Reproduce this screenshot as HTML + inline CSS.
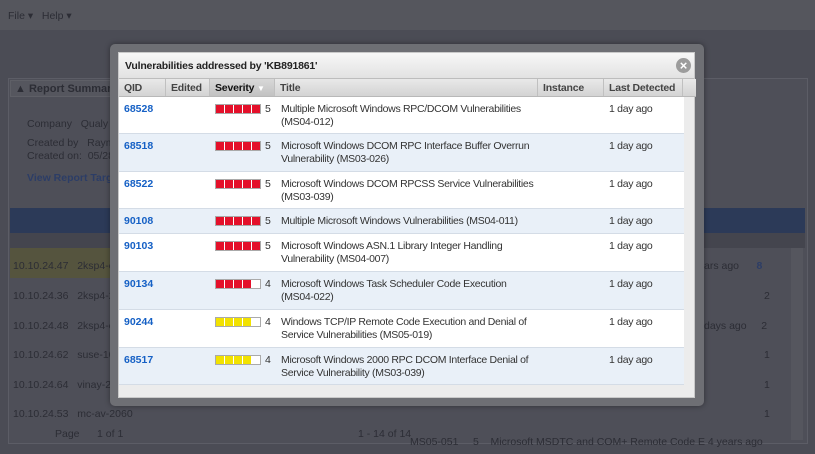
<!DOCTYPE html>
<html><head><meta charset="utf-8"><style>
*{margin:0;padding:0;box-sizing:border-box}
html,body{width:815px;height:454px;overflow:hidden;background:#4b4c55}
body{font-family:"Liberation Sans",sans-serif;position:relative}
.a{position:absolute}
.bg{color:#2c2d35;font-size:10.5px;white-space:nowrap}
.modal{left:110px;top:44px;width:594px;height:362px;background:#6e6f74;border-radius:5px;box-shadow:0 0 6px rgba(0,0,0,.4)}
.inner{left:118px;top:52px;width:577px;height:346px;background:#ececec;border:1px solid #c9c9c9}
.titlebar{left:0;top:0;width:575px;height:26px;background:linear-gradient(#f7f7f7,#e2e2e2);border-bottom:1px solid #bdbdbd;font-weight:bold;font-size:10.5px;color:#222;padding:7px 6px;letter-spacing:-0.2px}
.close{left:557px;top:5px;width:15px;height:15px;border-radius:50%;background:#9c9c9c;color:#fff;font-size:13px;line-height:15px;text-align:center;font-weight:bold}
.hdr{left:0;top:26px;width:577px;height:18px;background:linear-gradient(#e9e9e9,#d3d3d3);border-bottom:1px solid #b8b8b8}
.hdr div{position:absolute;top:0;height:17px;border-right:1px solid #c0c0c0;font-size:10.5px;color:#444;padding:3px 5px;font-weight:bold;white-space:nowrap;letter-spacing:-0.2px}
.grid{left:0;top:44px;width:565px;height:288px;background:#fff}
.row{position:absolute;left:0;width:565px;border-bottom:1px solid #d4dce6;font-size:10.5px;color:#333;letter-spacing:-0.3px}
.row.alt{background:#e9f0f8}
.q{position:absolute;left:5px;top:6px;color:#1560c5;font-weight:bold;letter-spacing:0}
.sev{position:absolute;left:96px;top:7px;width:46px;height:10px;display:flex;gap:1px;border:1px solid #aaa;background:#fff}
.sev i{display:block;width:8px;height:8px}
.n{position:absolute;left:146px;top:6px}
.t{position:absolute;left:162px;top:6px;width:260px;line-height:13px}
.l{position:absolute;left:490px;top:6px}
</style></head><body>
<svg class="a" style="left:0;top:0" width="815" height="454">
<rect x="0" y="0" width="815" height="454" fill="#4b4c55"/>
<rect x="0" y="0" width="815" height="30" fill="#55565d"/>
<rect x="8.5" y="78.5" width="799" height="365" fill="#4e4f58" stroke="#5c5d66"/>
<rect x="10.5" y="80.5" width="110" height="16" fill="#55565e" stroke="#5e5f66"/>
<rect x="10" y="208" width="795" height="25" fill="#2c3a58"/>
<rect x="10" y="233" width="795" height="15" fill="#44454e"/>
<rect x="10" y="248" width="100" height="30" fill="#55543e"/>
<rect x="791" y="248" width="12" height="192" fill="#55565e"/>
</svg>
<div class="a bg" style="left:8px;top:10px">File ▾ &nbsp; Help ▾</div>
<div class="a bg" style="left:15px;top:83px;font-weight:bold;font-size:11px">▲ Report Summary</div>
<div class="a bg" style="left:27px;top:118px">Company &nbsp; Qualy</div>
<div class="a bg" style="left:27px;top:137px">Created by &nbsp; Raym</div>
<div class="a bg" style="left:27px;top:150px">Created on: &nbsp;05/28</div>
<div class="a bg" style="left:27px;top:172px;color:#2c3d66;font-weight:bold">View Report Targe</div>
<div class="a bg" style="left:13px;top:260px">10.10.24.47 &nbsp; 2ksp4-cf-</div>
<div class="a bg" style="left:13px;top:290px">10.10.24.36 &nbsp; 2ksp4-26-</div>
<div class="a bg" style="left:13px;top:320px">10.10.24.48 &nbsp; 2ksp4-cf-</div>
<div class="a bg" style="left:13px;top:349px">10.10.24.62 &nbsp; suse-101-</div>
<div class="a bg" style="left:13px;top:379px">10.10.24.64 &nbsp; vinay-24-</div>
<div class="a bg" style="left:13px;top:408px">10.10.24.53 &nbsp; mc-av-2060</div>
<div class="a bg" style="left:55px;top:428px">Page &nbsp;&nbsp;&nbsp;&nbsp; 1 of 1</div>
<div class="a bg" style="left:358px;top:428px">1 - 14 of 14</div>
<div class="a bg" style="left:704px;top:260px">ars ago &nbsp;&nbsp;&nbsp;&nbsp; <b style="color:#2c3d66">8</b></div>
<div class="a bg" style="left:764px;top:290px">2</div>
<div class="a bg" style="left:704px;top:320px">days ago &nbsp;&nbsp;&nbsp; 2</div>
<div class="a bg" style="left:764px;top:349px">1</div>
<div class="a bg" style="left:764px;top:379px">1</div>
<div class="a bg" style="left:764px;top:408px">1</div>
<div class="a bg" style="left:410px;top:436px">MS05-051 &nbsp;&nbsp;&nbsp; 5 &nbsp;&nbsp; Microsoft MSDTC and COM+ Remote Code E 4 years ago</div>

<div class="a modal"></div>
<div class="a inner">
 <div class="a titlebar">Vulnerabilities addressed by 'KB891861'</div>
 <div class="a close">×</div>
 <div class="a hdr">
  <div style="left:0;width:47px">QID</div>
  <div style="left:47px;width:44px">Edited</div>
  <div style="left:91px;width:65px;background:linear-gradient(#d8d8d8,#c2c2c2);color:#111">Severity <span style="color:#fff;font-size:8px">▼</span></div>
  <div style="left:156px;width:263px">Title</div>
  <div style="left:419px;width:66px">Instance</div>
  <div style="left:485px;width:79px">Last Detected</div>
 </div>
 <div class="a grid">
  <div class="row" style="top:0;height:37px"><span class="q">68528</span><div class="sev"><i style="background:#e4102a"></i><i style="background:#e4102a"></i><i style="background:#e4102a"></i><i style="background:#e4102a"></i><i style="background:#e4102a"></i></div><span class="n">5</span><span class="t">Multiple Microsoft Windows RPC/DCOM Vulnerabilities (MS04-012)</span><span class="l">1 day ago</span></div>
  <div class="row alt" style="top:37px;height:38px"><span class="q">68518</span><div class="sev"><i style="background:#e4102a"></i><i style="background:#e4102a"></i><i style="background:#e4102a"></i><i style="background:#e4102a"></i><i style="background:#e4102a"></i></div><span class="n">5</span><span class="t">Microsoft Windows DCOM RPC Interface Buffer Overrun Vulnerability (MS03-026)</span><span class="l">1 day ago</span></div>
  <div class="row" style="top:75px;height:37px"><span class="q">68522</span><div class="sev"><i style="background:#e4102a"></i><i style="background:#e4102a"></i><i style="background:#e4102a"></i><i style="background:#e4102a"></i><i style="background:#e4102a"></i></div><span class="n">5</span><span class="t">Microsoft Windows DCOM RPCSS Service Vulnerabilities (MS03-039)</span><span class="l">1 day ago</span></div>
  <div class="row alt" style="top:112px;height:25px"><span class="q">90108</span><div class="sev"><i style="background:#e4102a"></i><i style="background:#e4102a"></i><i style="background:#e4102a"></i><i style="background:#e4102a"></i><i style="background:#e4102a"></i></div><span class="n">5</span><span class="t" style="width:300px">Multiple Microsoft Windows Vulnerabilities (MS04-011)</span><span class="l">1 day ago</span></div>
  <div class="row" style="top:137px;height:38px"><span class="q">90103</span><div class="sev"><i style="background:#e4102a"></i><i style="background:#e4102a"></i><i style="background:#e4102a"></i><i style="background:#e4102a"></i><i style="background:#e4102a"></i></div><span class="n">5</span><span class="t">Microsoft Windows ASN.1 Library Integer Handling Vulnerability (MS04-007)</span><span class="l">1 day ago</span></div>
  <div class="row alt" style="top:175px;height:38px"><span class="q">90134</span><div class="sev"><i style="background:#e4102a"></i><i style="background:#e4102a"></i><i style="background:#e4102a"></i><i style="background:#e4102a"></i><i></i></div><span class="n">4</span><span class="t">Microsoft Windows Task Scheduler Code Execution (MS04-022)</span><span class="l">1 day ago</span></div>
  <div class="row" style="top:213px;height:38px"><span class="q">90244</span><div class="sev"><i style="background:#f2e200"></i><i style="background:#f2e200"></i><i style="background:#f2e200"></i><i style="background:#f2e200"></i><i></i></div><span class="n">4</span><span class="t">Windows TCP/IP Remote Code Execution and Denial of Service Vulnerabilities (MS05-019)</span><span class="l">1 day ago</span></div>
  <div class="row alt" style="top:251px;height:37px"><span class="q">68517</span><div class="sev"><i style="background:#f2e200"></i><i style="background:#f2e200"></i><i style="background:#f2e200"></i><i style="background:#f2e200"></i><i></i></div><span class="n">4</span><span class="t">Microsoft Windows 2000 RPC DCOM Interface Denial of Service Vulnerability (MS03-039)</span><span class="l">1 day ago</span></div>
 </div>
</div>
</body></html>
